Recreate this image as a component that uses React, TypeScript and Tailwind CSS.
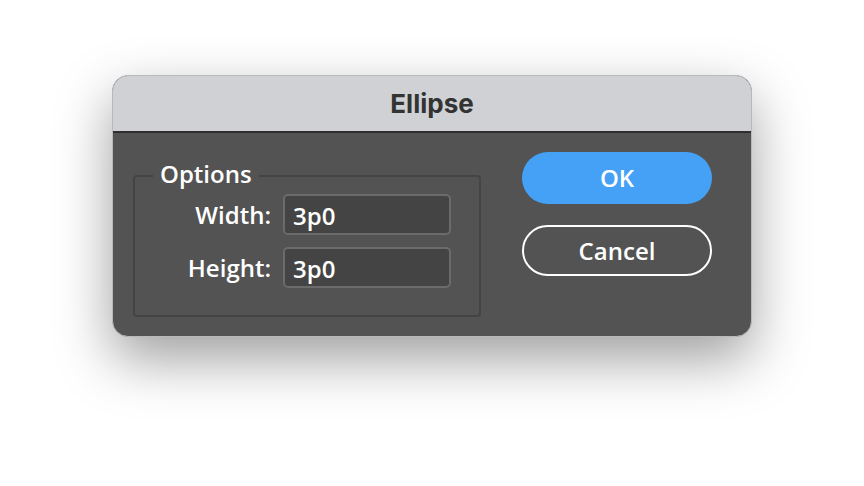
import React from 'react';

const bodyFont = { fontFamily: '"Open Sans", "DejaVu Sans", sans-serif' };

export default function App() {
  return (
    <div className="w-[864px] h-[486px] bg-white overflow-hidden" style={bodyFont}>
      <div className="mx-auto mt-[75px] w-[640px] h-[262px] rounded-[16px] overflow-hidden bg-[#535353] border border-[#b9b9bb] shadow-[0_22px_55px_rgba(0,0,0,0.38)] flex flex-col">
        {/* Title bar */}
        <div className="h-[57px] shrink-0 bg-[#d0d1d4] border-b-2 border-[#2e2e2e] flex items-center justify-center">
          <span
            className="text-[26px] font-bold text-[#333333] leading-none"
            style={{ fontFamily: 'Inter, "Liberation Sans", sans-serif' }}
          >
            Ellipse
          </span>
        </div>

        {/* Body */}
        <div className="flex pl-[20px] pr-[39px] pt-[19px] font-semibold">
          <div className="relative mt-[23px] w-[348px] h-[142px] border-2 border-[#444444] rounded-[4px] pt-[17px] pr-[28px] flex flex-col items-end gap-[12px]">
            <span className="absolute left-[18px] -top-[15px] px-[7px] bg-[#535353] text-[24px] leading-[24px] text-white">
              Options
            </span>
            {['Width:', 'Height:'].map((label) => (
              <div key={label} className="flex items-center gap-[12px]">
                <span className="text-[24px] leading-[24px] text-white">{label}</span>
                <div className="w-[168px] h-[41px] bg-[#444444] border-2 border-[#6b6b6b] rounded-[5px] pl-[8px] flex items-center">
                  <span className="text-[24px] leading-[24px] text-white pt-[2px]">3p0</span>
                </div>
              </div>
            ))}
          </div>

          <div className="ml-[41px] flex flex-col gap-[21px]">
            <button className="w-[190px] h-[52px] rounded-full bg-[#45a1f5] text-white text-[24px] leading-none">
              OK
            </button>
            <button className="w-[190px] h-[51px] rounded-full border-2 border-white text-white text-[24px] leading-none">
              Cancel
            </button>
          </div>
        </div>
      </div>
    </div>
  );
}
